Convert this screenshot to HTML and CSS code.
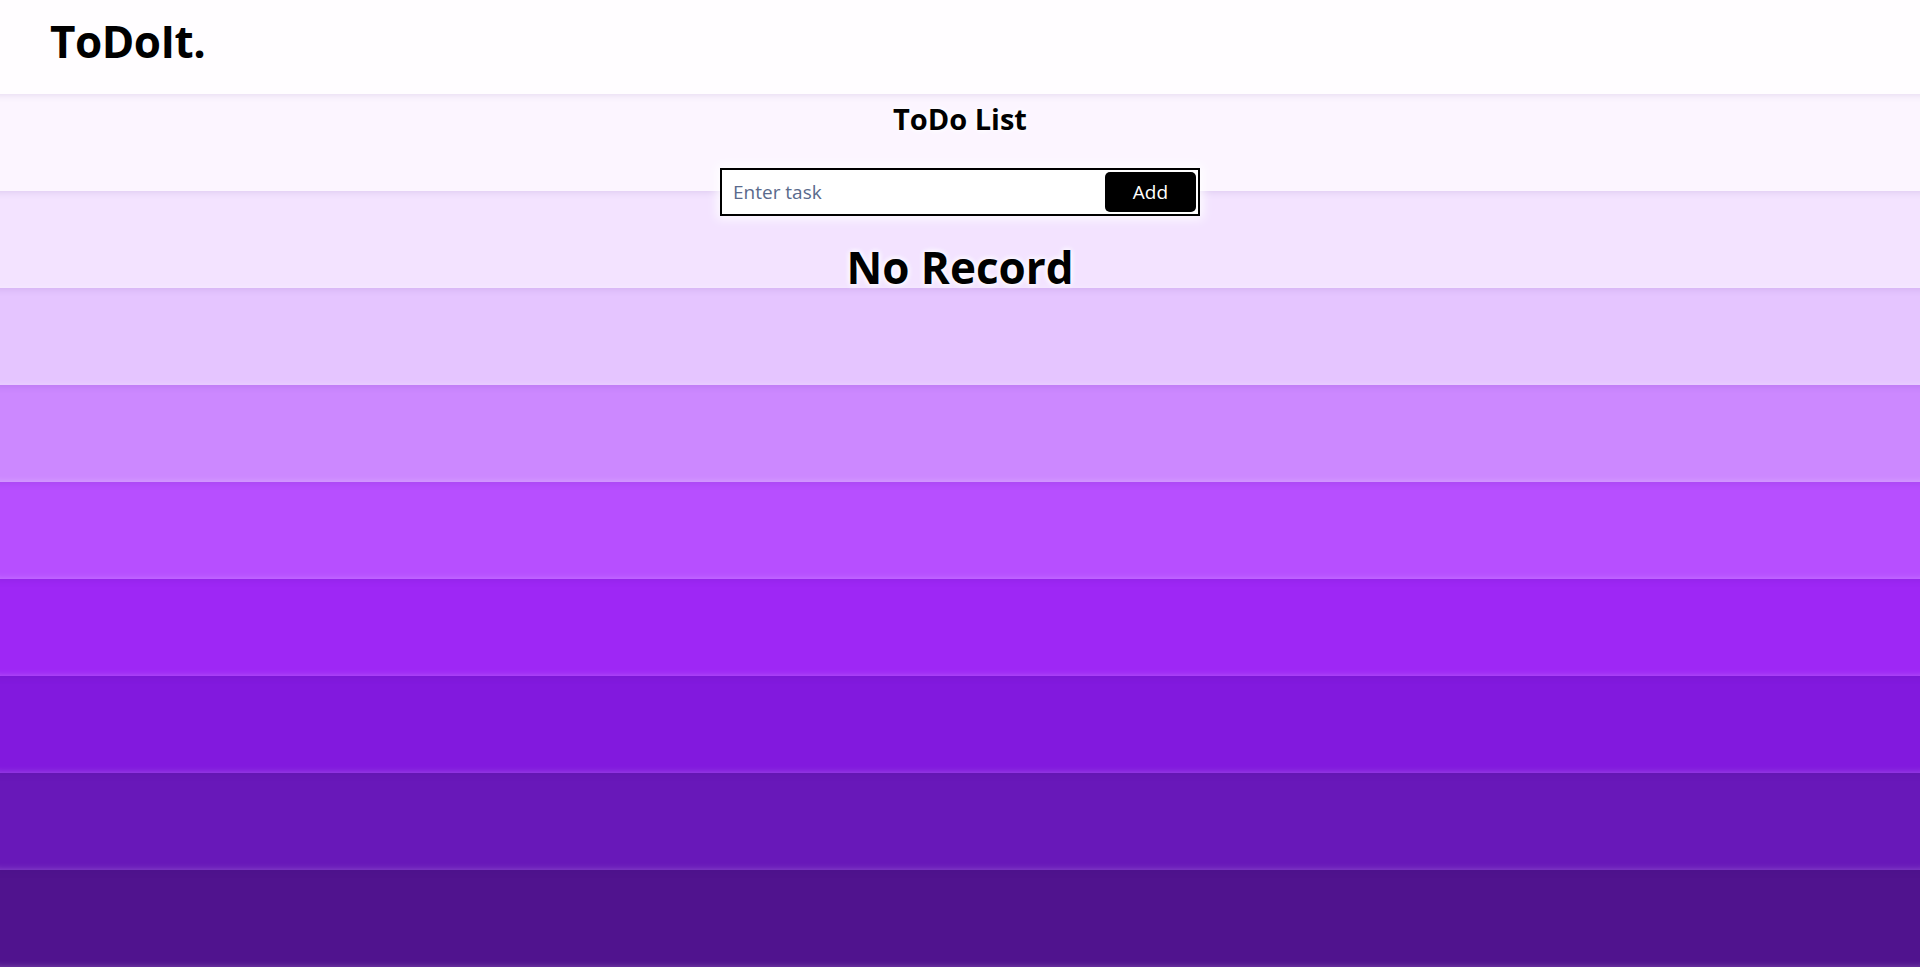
FILE: index.html
```html
<!DOCTYPE html>
<html lang="en">
<head>
<meta charset="utf-8">
<title>ToDoIt.</title>
<link rel="stylesheet" href="styles.css">
</head>
<body>
<div class="page">
  <div class="stripes">
    <div class="band band-0"></div>
    <div class="band band-1"></div>
    <div class="band band-2"></div>
    <div class="band band-3"></div>
    <div class="band band-4"></div>
    <div class="band band-5"></div>
    <div class="band band-6"></div>
    <div class="band band-7"></div>
    <div class="band band-8"></div>
    <div class="band band-9"></div>
  </div>
  <div class="content">
    <header class="topbar">
      <div class="logo">ToDoIt.</div>
    </header>
    <main class="main">
      <h1 class="title">ToDo List</h1>
      <form class="task-form">
        <input class="task-input" type="text" placeholder="Enter task">
        <button class="add-btn" type="button">Add</button>
      </form>
      <h2 class="empty">No Record</h2>
    </main>
  </div>
</div>
</body>
</html>
```
FILE: styles.css
```css
* { box-sizing: border-box; }
html, body { margin: 0; padding: 0; }
body {
  font-family: "Open Sans", "Noto Sans", sans-serif;
  color: #000;
  overflow: hidden;
}
.page {
  display: grid;
  height: 967px;
}
.stripes, .content { grid-area: 1 / 1; }
.stripes {
  display: flex;
  flex-direction: column;
}
.band {
  flex: 1;
  box-shadow: inset 0 9px 9px -9px rgba(60, 0, 120, 0.14), inset 0 -7px 7px -7px rgba(255, 255, 255, 0.25);
}
.band-0 { flex: 0 0 94px; background: #fffdff; box-shadow: none; }
.band-1 { background: #fcf5ff; }
.band-2 { background: #f3e3ff; }
.band-3 { background: #e5c5ff; }
.band-4 { background: #cc88ff; }
.band-5 { background: #b74fff; }
.band-6 { background: #9e27f5; }
.band-7 { background: #8219de; }
.band-8 { background: #6818b9; }
.band-9 { background: #50138e; }

.content {
  display: flex;
  flex-direction: column;
}
.topbar {
  height: 94px;
  display: flex;
  align-items: center;
  padding-left: 50px;
}
.logo {
  font-size: 44px;
  font-weight: 700;
  letter-spacing: -0.5px;
  line-height: 1;
  margin-top: -12px;
}
.main {
  display: flex;
  flex-direction: column;
  align-items: center;
}
.title {
  margin: 7px 0 0;
  font-size: 29px;
  line-height: 36px;
  font-weight: 700;
  text-shadow: 0 0 6px #fff, 0 0 6px #fff;
}
.task-form {
  margin-top: 31px;
  width: 480px;
  height: 48px;
  border: 2px solid #000;
  background: #fff;
  padding: 2px;
  display: flex;
  box-shadow: 0 0 10px 3px rgba(255, 255, 255, 0.9);
}
.task-input {
  flex: 1;
  border: 0;
  outline: none;
  background: transparent;
  font-family: inherit;
  font-size: 19px;
  padding: 0 0 0 9px;
  color: #000;
}
.task-input::placeholder { color: #5a6a8c; }
.add-btn {
  width: 91px;
  height: 40px;
  border: 0;
  border-radius: 5px;
  background: #000;
  color: #fff;
  font-family: inherit;
  font-size: 19px;
  font-weight: 500;
}
.empty {
  margin: 24px 0 0;
  font-size: 44px;
  line-height: 54px;
  font-weight: 700;
  text-shadow: 0 0 6px #fff, 0 0 6px #fff;
}
```
